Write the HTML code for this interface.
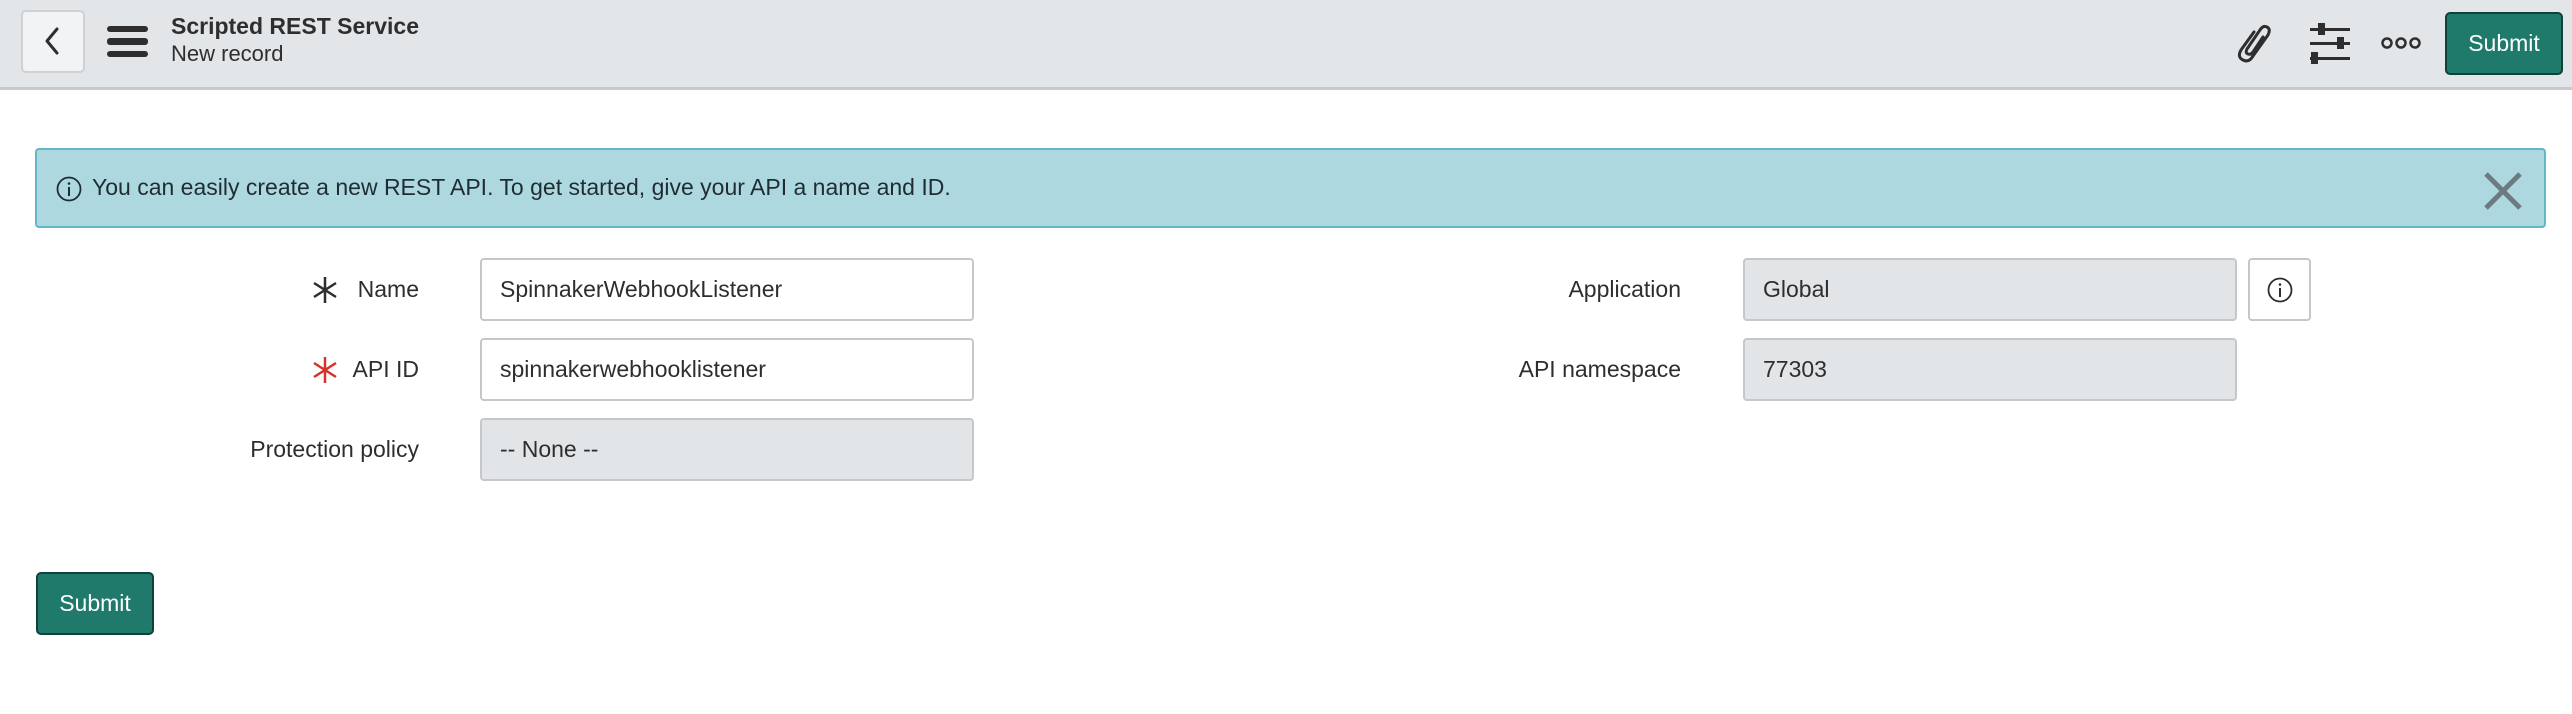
<!DOCTYPE html>
<html><head><style>
*{box-sizing:border-box;margin:0;padding:0}
body{width:2572px;height:714px;background:#fff;font-family:"Liberation Sans",sans-serif;color:#2e2e2e;position:relative;overflow:hidden}
.hdr{position:absolute;left:0;top:0;width:2572px;height:90px;background:#e2e6e9;border-bottom:3px solid #c9c9c9}
.abs{position:absolute}
.back{left:21px;top:10px;width:64px;height:63px;border:2px solid #cfd2d4;border-radius:5px;background:#f2f3f4}
.t1{left:171px;top:13px;font-size:23px;font-weight:bold;color:#2e2e2e}
.t2{left:171px;top:41px;font-size:22px;color:#2e2e2e}
.btn{background:#1f7a6b;border:2px solid #11423a;border-radius:5px;color:#fff;font-size:23px;display:flex;align-items:center;justify-content:center}
.banner{left:35px;top:148px;width:2511px;height:80px;background:#aed8e0;border:2px solid #62b7c8;border-radius:4px}
.btxt{left:92px;top:174px;font-size:23px;color:#1f2d33}
.lbl{font-size:23px;text-align:right;color:#2e2e2e}
.inp{border:2px solid #c5c7c9;border-radius:4px;background:#fff;font-size:23px;padding-left:18px;display:flex;align-items:center;color:#2e2e2e}
.ro{background:#e2e5e8}
</style></head><body>
<div class="hdr"></div>
<div class="abs back"><svg width="60" height="59" viewBox="0 0 60 59"><path d="M34 17 L24 29 L34 41" fill="none" stroke="#2e2e2e" stroke-width="3" stroke-linecap="round" stroke-linejoin="round"/></svg></div>
<svg class="abs" style="left:107px;top:26px" width="42" height="32"><rect x="0" y="0" width="41" height="6" rx="3" fill="#2e2e2e"/><rect x="0" y="12" width="41" height="7" rx="3" fill="#2e2e2e"/><rect x="0" y="25" width="41" height="6" rx="3" fill="#2e2e2e"/></svg>
<div class="abs t1">Scripted REST Service</div>
<div class="abs t2">New record</div>
<svg class="abs" style="left:2234px;top:22px" width="44" height="42" viewBox="0 0 44 42"><path d="M20 10 L7 28 Q3 35 9 38 Q15 41 19 34 L34 13 Q37 7 33 5 Q29 3 26 8 L13 27 Q11 31 14 32 Q17 33 19 30 L29 15" fill="none" stroke="#2e2e2e" stroke-width="3" stroke-linecap="round"/></svg>
<svg class="abs" style="left:2308px;top:20px" width="46" height="44"><g fill="#2e2e2e"><rect x="2" y="8" width="40" height="3"/><rect x="10" y="3" width="7" height="12"/><rect x="2" y="22" width="40" height="3"/><rect x="29" y="17" width="7" height="12"/><rect x="2" y="37" width="40" height="3"/><rect x="3" y="32" width="7" height="12"/></g></svg>
<svg class="abs" style="left:2381px;top:36px" width="44" height="14"><g fill="none" stroke="#2e2e2e" stroke-width="2.5"><circle cx="6" cy="7" r="4.5"/><circle cx="20" cy="7" r="4.5"/><circle cx="34" cy="7" r="4.5"/></g></svg>
<div class="abs btn" style="left:2445px;top:12px;width:118px;height:63px">Submit</div>

<div class="abs banner"></div>
<svg class="abs" style="left:55px;top:175px" width="28" height="28"><circle cx="14" cy="14" r="11.5" fill="none" stroke="#1f2d33" stroke-width="1.8"/><rect x="13" y="12" width="2" height="9" fill="#1f2d33"/><circle cx="14" cy="8.5" r="1.3" fill="#1f2d33"/></svg>
<div class="abs btxt">You can easily create a new REST API. To get started, give your API a name and ID.</div>
<svg class="abs" style="left:2482px;top:170px" width="42" height="42"><path d="M4 4 L38 38 M38 4 L4 38" stroke="#6b7b80" stroke-width="5"/></svg>

<svg class="abs" style="left:311px;top:276px" width="28" height="28"><g stroke="#2e2e2e" stroke-width="2.5"><path d="M14 1 V27 M3 7 L25 21 M25 7 L3 21"/></g></svg>
<div class="abs lbl" style="left:250px;width:169px;top:276px">Name</div>
<div class="abs inp" style="left:480px;top:258px;width:494px;height:63px">SpinnakerWebhookListener</div>

<svg class="abs" style="left:311px;top:356px" width="28" height="28"><g stroke="#d6322c" stroke-width="2.5"><path d="M14 1 V27 M3 7 L25 21 M25 7 L3 21"/></g></svg>
<div class="abs lbl" style="left:250px;width:169px;top:356px">API ID</div>
<div class="abs inp" style="left:480px;top:338px;width:494px;height:63px">spinnakerwebhooklistener</div>

<div class="abs lbl" style="left:150px;width:269px;top:436px">Protection policy</div>
<div class="abs inp ro" style="left:480px;top:418px;width:494px;height:63px">-- None --</div>

<div class="abs lbl" style="left:1400px;width:281px;top:276px">Application</div>
<div class="abs inp ro" style="left:1743px;top:258px;width:494px;height:63px">Global</div>
<div class="abs inp" style="left:2248px;top:258px;width:63px;height:63px;padding:0;justify-content:center"><svg width="28" height="28"><circle cx="14" cy="14" r="11.5" fill="none" stroke="#2e2e2e" stroke-width="1.8"/><rect x="13" y="12" width="2" height="9" fill="#2e2e2e"/><circle cx="14" cy="8.5" r="1.3" fill="#2e2e2e"/></svg></div>

<div class="abs lbl" style="left:1400px;width:281px;top:356px">API namespace</div>
<div class="abs inp ro" style="left:1743px;top:338px;width:494px;height:63px">77303</div>

<div class="abs btn" style="left:36px;top:572px;width:118px;height:63px">Submit</div>
</body></html>
